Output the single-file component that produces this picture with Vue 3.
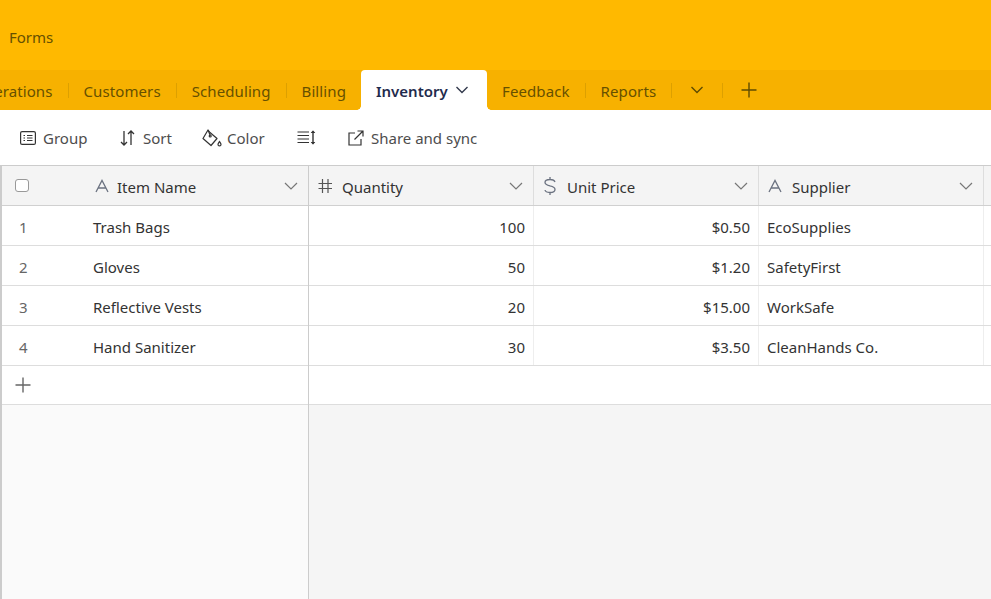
<script setup>
const TABS_LEFT = ['Operations', 'Customers', 'Scheduling', 'Billing']
const TABS_RIGHT = ['Feedback', 'Reports']

const COLUMNS = [
  { name: 'Quantity', icon: 'hash' },
  { name: 'Unit Price', icon: 'dollar' },
  { name: 'Supplier', icon: 'text' }
]

const ROWS = [
  { id: 1, name: 'Trash Bags', qty: 100, price: '$0.50', supplier: 'EcoSupplies' },
  { id: 2, name: 'Gloves', qty: 50, price: '$1.20', supplier: 'SafetyFirst' },
  { id: 3, name: 'Reflective Vests', qty: 20, price: '$15.00', supplier: 'WorkSafe' },
  { id: 4, name: 'Hand Sanitizer', qty: 30, price: '$3.50', supplier: 'CleanHands Co.' }
]
</script>

<template>
  <div class="app">
    <header class="top-bar">
      <span class="forms">Forms</span>
    </header>

    <nav class="tabs">
      <div class="tab-strip left">
        <template v-for="(tab, i) in TABS_LEFT" :key="tab">
          <span class="tab">{{ tab }}</span>
          <span v-if="i < TABS_LEFT.length - 1" class="tab-sep"></span>
        </template>
      </div>
      <div class="tab active">
        Inventory
        <svg class="tab-caret" width="14" height="14" viewBox="0 0 14 14"><path d="M1.500 4 7 9.500 12.500 4" fill="none" stroke="#333a4d" stroke-width="1.400"/></svg>
      </div>
      <div class="tab-strip right">
        <span class="tab">{{ TABS_RIGHT[0] }}</span>
        <span class="tab-sep"></span>
        <span class="tab">{{ TABS_RIGHT[1] }}</span>
        <span class="tab-sep"></span>
        <svg class="more" width="14" height="14" viewBox="0 0 14 14"><path d="M1.500 4 7 9.500 12.500 4" fill="none" stroke="#5f4b00" stroke-width="1.400"/></svg>
        <span class="tab-sep"></span>
        <svg class="plus" width="16" height="16" viewBox="0 0 16 16"><path d="M8 0.500V15.500M0.500 8H15.500" fill="none" stroke="#5f4b00" stroke-width="1.400"/></svg>
      </div>
    </nav>

    <div class="toolbar">
      <button class="tool tool-group">
        <svg width="16" height="14" viewBox="0 0 16 14" fill="none" stroke="#333" stroke-width="1.200"><rect x="0.600" y="0.600" width="14.800" height="12.800" rx="1.500"/><path d="M3.500 4.500H5M3.500 7H5M3.500 9.500H5M7 4.500H12.500M7 7H12.500M7 9.500H12.500"/></svg>
        Group
      </button>
      <button class="tool tool-sort">
        <svg width="15" height="16" viewBox="0 0 15 16" fill="none" stroke="#333" stroke-width="1.300"><path d="M4 1V15M1 12 4 15 7 12M11 15V1M8 4 11 1 14 4"/></svg>
        Sort
      </button>
      <button class="tool tool-color">
        <svg width="20" height="18" viewBox="0 0 20 18" fill="none" stroke="#333" stroke-width="1.200"><path d="M6 1 8 3.500 15 9.500 9 16.500 1 9.500Z" stroke-linejoin="round"/><path d="M6 1 8.200 6.200"/><circle cx="8.200" cy="7" r="1"/><path d="M17.500 12.500C16.500 14 16 14.600 16 15.400A1.500 1.500 0 0 0 19 15.400C19 14.600 18.500 14 17.500 12.500Z"/></svg>
        Color
      </button>
      <button class="tool tool-height">
        <svg width="19" height="15" viewBox="0 0 19 15" fill="none" stroke="#333" stroke-width="1.200"><path d="M0.500 2H12M0.500 5.500H12M0.500 9H12M0.500 12.500H12"/><path d="M16 1.500V13.500" stroke-width="1.400"/><path d="M14 3 16 0.800 18 3M14 12 16 14.200 18 12" fill="#333" stroke-width="0.800"/></svg>
      </button>
      <button class="tool tool-share">
        <svg width="16" height="16" viewBox="0 0 16 16" fill="none" stroke="#333" stroke-width="1.200"><path d="M7 3H1V15H13V9"/><path d="M6.500 9.500 15 1M9.500 1H15V6.500"/></svg>
        Share and sync
      </button>
    </div>

    <div class="grid-wrap">
      <section class="pane-left">
        <div class="head-row head-left">
          <span class="check"></span>
          <svg class="field-icon" width="16" height="14" viewBox="0 0 16 14" fill="none" stroke="#6b7280" stroke-width="1.300"><path d="M2 13 8 1.500 14 13M4.200 9H11.800"/></svg>
          <span class="head-name">Item Name</span>
          <svg class="caret" width="14" height="14" viewBox="0 0 14 14"><path d="M1 4 7 10 13 4" fill="none" stroke="#777" stroke-width="1.200"/></svg>
        </div>
        <div v-for="row in ROWS" :key="row.id" class="row row-left">
          <span class="row-num">{{ row.id }}</span>
          <span class="row-name">{{ row.name }}</span>
        </div>
        <div class="row add-row">
          <svg width="16" height="16" viewBox="0 0 16 16"><path d="M8 0.500V15.500M0.500 8H15.500" fill="none" stroke="#666" stroke-width="1.400"/></svg>
        </div>
      </section>

      <section class="pane-main">
        <div class="head-row head-main">
          <div v-for="col in COLUMNS" :key="col.name" class="head-cell">
            <svg v-if="col.icon === 'hash'" class="field-icon" width="16" height="16" viewBox="0 0 16 16" fill="none" stroke="#555" stroke-width="1.200"><path d="M5.500 1V15M11 1V15M1.500 5.500H15M1.500 10.500H15"/></svg>
            <svg v-else-if="col.icon === 'dollar'" class="field-icon" width="16" height="18" viewBox="0 0 16 18" fill="none" stroke="#6b7280" stroke-width="1.300"><path d="M13 5C12.500 3.300 10.500 2.500 8 2.500 5 2.500 3 3.600 3 5.500 3 7.700 5.500 8.300 8 8.900 10.800 9.500 13 10.200 13 12.500 13 14.500 10.800 15.500 8 15.500 5.200 15.500 3.300 14.700 3 13M8 0V2.500M8 15.500V18"/></svg>
            <svg v-else class="field-icon" width="16" height="14" viewBox="0 0 16 14" fill="none" stroke="#6b7280" stroke-width="1.300"><path d="M2 13 8 1.500 14 13M4.200 9H11.800"/></svg>
            <span class="head-name">{{ col.name }}</span>
            <svg class="caret" width="14" height="14" viewBox="0 0 14 14"><path d="M1 4 7 10 13 4" fill="none" stroke="#777" stroke-width="1.200"/></svg>
          </div>
          <div class="head-cell tail"></div>
        </div>
        <div v-for="row in ROWS" :key="row.id" class="row row-main">
          <div class="cell num">{{ row.qty }}</div>
          <div class="cell num">{{ row.price }}</div>
          <div class="cell">{{ row.supplier }}</div>
          <div class="cell tail"></div>
        </div>
        <div class="row add-main"></div>
      </section>
    </div>
  </div>
</template>

<style>
html, body {
  margin: 0;
  height: 100%;
  overflow: hidden;
}
</style>

<style scoped>
.app {
  width: 991px;
  height: 599px;
  display: flex;
  flex-direction: column;
  overflow: hidden;
  font-family: "Noto Sans", "Open Sans", sans-serif;
  font-size: 15px;
  color: #333;
}

.top-bar {
  flex: 0 0 70px;
  display: flex;
  align-items: center;
  padding: 4px 0 0 9px;
  box-sizing: border-box;
  background: #ffb900;
}

.forms {
  color: #665000;
}

.tabs {
  flex: 0 0 40px;
  display: flex;
  align-items: center;
  background: #f7b100;
  color: #665000;
  overflow: hidden;
}

.tab-strip {
  display: flex;
  align-items: center;
  flex: none;
  letter-spacing: 0.1px;
}

.tab-strip.left {
  margin-left: -42px;
  width: 403px;
}

.tab {
  padding: 2px 15px 0;
  white-space: nowrap;
}

.tab-sep {
  width: 1px;
  height: 15px;
  background: #dda000;
}

.tab.active {
  position: relative;
  align-self: flex-end;
  flex: none;
  height: 40px;
  width: 126px;
  box-sizing: border-box;
  display: flex;
  align-items: center;
  gap: 7px;
  padding: 2px 0 0 15px;
  background: #fff;
  border-radius: 4px 4px 0 0;
  color: #1f2b4d;
  font-weight: 600;
}

/* little inverted corners where the tab meets the toolbar */
.tab.active::before,
.tab.active::after {
  content: '';
  position: absolute;
  bottom: 0;
  width: 4px;
  height: 4px;
}

.tab.active::before {
  left: -4px;
  background: radial-gradient(circle at 0 0, #f7b100 3.5px, #fff 4px);
}

.tab.active::after {
  right: -4px;
  background: radial-gradient(circle at 100% 0, #f7b100 3.5px, #fff 4px);
}

.tab-caret {
  margin-top: -2px;
}

.more {
  margin: 0 18px;
}

.plus {
  margin-left: 18px;
}

.toolbar {
  flex: 0 0 55px;
  display: flex;
  align-items: center;
  background: #fff;
  padding-left: 20px;
  box-sizing: border-box;
}

.tool {
  display: flex;
  align-items: center;
  gap: 7px;
  padding: 0;
  border: 0;
  background: none;
  font: inherit;
  color: #4d4d4d;
}

.tool-group { width: 100px; }
.tool-sort { width: 82px; gap: 8px; }
.tool-color { width: 95px; gap: 5px; }
.tool-height { width: 51px; }

.grid-wrap {
  flex: 1;
  display: flex;
  min-height: 0;
  border-top: 1px solid #ccc;
  border-left: 2px solid #ccc;
  background: #f5f5f5;
}

.pane-left {
  flex: 0 0 306px;
  background: #fafafa;
  border-right: 1px solid #ccc;
}

.pane-main {
  flex: 1;
  min-width: 0;
}

.head-row {
  height: 40px;
  display: flex;
  align-items: center;
  box-sizing: border-box;
  background: #f4f4f4;
  border-bottom: 1px solid #d0d0d0;
  color: #333;
}

.head-left {
  padding-left: 13px;
}

.check {
  width: 12px;
  height: 11px;
  border: 1px solid #999;
  border-radius: 3px;
  background: #fff;
  margin-right: 65px;
}

.field-icon {
  flex: none;
  margin-right: 9px;
}

.head-left .field-icon {
  margin-right: 7px;
}

.head-name {
  flex: 1;
  padding-top: 2px;
}

.caret {
  flex: none;
  margin-right: 10px;
}

.head-main {
  align-items: stretch;
}

.head-cell {
  flex: 0 0 225px;
  box-sizing: border-box;
  display: flex;
  align-items: center;
  padding-left: 8px;
  border-right: 1px solid #ddd;
}

.head-cell.tail,
.cell.tail {
  flex: 1;
  border-right: 0;
}

.row {
  height: 40px;
  box-sizing: border-box;
  display: flex;
  align-items: center;
  background: #fff;
  border-bottom: 1px solid #ddd;
  padding-top: 2px;
}

.row-left {
  padding-left: 17px;
}

.row-num {
  width: 74px;
  color: #666;
}

.row-name {
  color: #333;
}

.add-row {
  height: 39px;
  padding: 0 0 0 13px;
}

.add-main {
  height: 39px;
}

.row-main {
  align-items: stretch;
  padding-top: 0;
}

.cell {
  flex: 0 0 225px;
  box-sizing: border-box;
  display: flex;
  align-items: center;
  padding: 2px 8px 0;
  border-right: 1px solid #eee;
}

.cell.num {
  justify-content: flex-end;
}
</style>
